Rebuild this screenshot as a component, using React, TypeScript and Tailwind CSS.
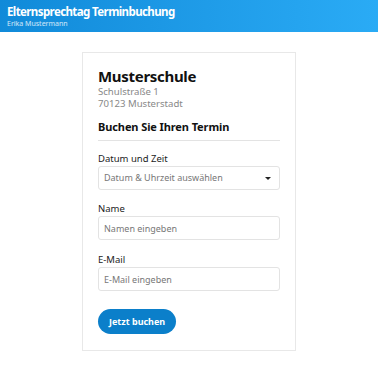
export default function App() {
  return (
    <div className="min-h-[365px] bg-white font-['Noto_Sans',sans-serif] text-[#222]">
      <header className="h-[32px] bg-gradient-to-r from-[#108ad9] to-[#2aabf5] px-[7px] pt-[4px] text-white">
        <h1 className="text-[11.5px] font-bold leading-[15px] tracking-[-0.6px]">Elternsprechtag Terminbuchung</h1>
        <p className="text-[7px] leading-[10px] text-white/80">Erika Mustermann</p>
      </header>
      <main className="flex justify-center pt-[20px]">
        <div className="w-[214px] border border-[#e8e8e8] bg-white px-[15px] pt-[13px] pb-[16px]">
          <h2 className="text-[15px] font-bold leading-[20px] tracking-[-0.3px] text-[#111]">Musterschule</h2>
          <p className="text-[9.6px] leading-[12px] text-[#888]">Schulstraße 1</p>
          <p className="text-[9.6px] leading-[12px] text-[#888]">70123 Musterstadt</p>
          <h3 className="mt-[9px] text-[11px] font-bold leading-[16px] tracking-[-0.1px] text-[#111]">Buchen Sie Ihren Termin</h3>
          <hr className="mt-[5px] border-t border-[#e3e3e3]" />
          <div className="mt-[11px]">
            <label className="block text-[9.5px] leading-[14px] text-[#222]">Datum und Zeit</label>
            <div className="flex h-[24px] items-center justify-between rounded-[3px] border border-[#e3e3e3] pl-[5px] pr-[8px]">
              <span className="text-[9px] text-[#777]">Datum &amp; Uhrzeit auswählen</span>
              <span className="h-0 w-0 border-x-[3px] border-t-[3px] border-x-transparent border-t-[#222]" />
            </div>
          </div>
          <div className="mt-[12px]">
            <label className="block text-[9.5px] leading-[14px] text-[#222]">Name</label>
            <input
              className="block h-[24px] w-full rounded-[3px] border border-[#e3e3e3] px-[5px] text-[9px] text-[#222] outline-none placeholder:text-[#777]"
              placeholder="Namen eingeben"
            />
          </div>
          <div className="mt-[13px]">
            <label className="block text-[9.5px] leading-[14px] text-[#222]">E-Mail</label>
            <input
              className="block h-[24px] w-full rounded-[3px] border border-[#e3e3e3] px-[5px] text-[9px] text-[#222] outline-none placeholder:text-[#777]"
              placeholder="E-Mail eingeben"
            />
          </div>
          <button className="mt-[18px] h-[25px] rounded-full bg-[#0b7fca] px-[11px] text-[9px] font-bold text-white">
            Jetzt buchen
          </button>
        </div>
      </main>
    </div>
  )
}
